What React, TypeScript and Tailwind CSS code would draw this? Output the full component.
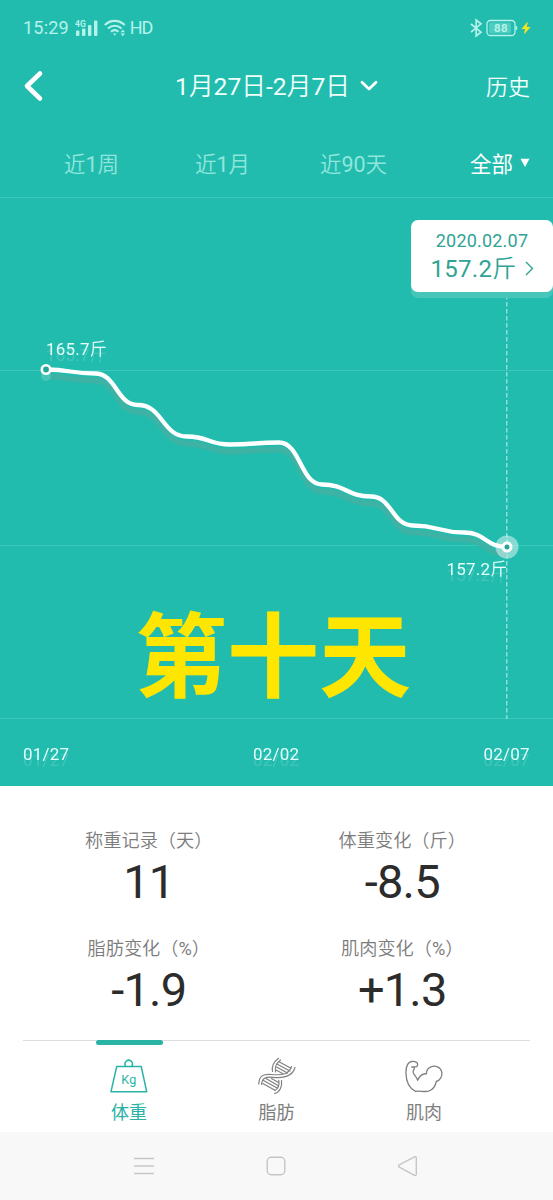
import type { ReactNode } from "react";

const ranges = ["近1周", "近1月", "近90天"];

const stats = [
  { label: "称重记录（天）", value: "11" },
  { label: "体重变化（斤）", value: "-8.5" },
  { label: "脂肪变化（%）", value: "-1.9" },
  { label: "肌肉变化（%）", value: "+1.3" }
];

// chart points in svg units, one per weigh-in
const points: [number, number][] = [
  [46, 171.5],
  [95, 175.5],
  [138, 207],
  [187, 238.5],
  [230, 246.5],
  [279, 244.5],
  [322, 286.5],
  [371, 298.5],
  [413, 327.5],
  [464, 334.5],
  [507, 349]
];

function smoothPath(list: [number, number][]) {
  return list.reduce((d, [x, y], i) => {
    if (i === 0) return `M${x} ${y}`;
    const [px, py] = list[i - 1];
    const mid = (px + x) / 2;
    return `${d} C${mid} ${py} ${mid} ${y} ${x} ${y}`;
  }, "");
}

// Chinese text is demi-light, digits keep the normal weight
function Mixed({ text }: { text: string }) {
  return (
    <span className="font-[350]">
      {text.split(/([\d%-]+)/).map((part, i) =>
        i % 2 ? (
          <span key={i} className="font-normal">
            {part}
          </span>
        ) : (
          part
        )
      )}
    </span>
  );
}

function StatusBar() {
  return (
    <div className="flex h-14 items-center justify-between pr-[22px] pl-[23px] text-[#b5f3ea]">
      <div className="flex items-center">
        <span className="text-[18px] leading-none tracking-[0.2px]">15:29</span>
        <svg className="ml-[6px]" width="24" height="18" viewBox="0 0 24 18" fill="currentColor">
          <text x="0" y="7.500" fontSize="8.500" fontWeight="700">4G</text>
          <rect x="1" y="11.500" width="3.400" height="5.500" rx="1" />
          <rect x="7" y="9.500" width="3.400" height="7.500" rx="1" />
          <rect x="13" y="6" width="3.400" height="11" rx="1" />
          <rect x="19" y="1.500" width="3.400" height="15.500" rx="1" />
        </svg>
        <svg className="ml-[5px]" width="23" height="18" viewBox="0 0 23 18" fill="none" stroke="currentColor" strokeWidth="2.100">
          <path d="M.8 6C6.500 .5 15 .5 20.700 6" />
          <path d="M4 9.500C8 5.800 13.500 5.800 17.500 9.500" />
          <path d="M7 12.800C9.300 10.800 12.200 10.800 14.500 12.800" />
          <path d="M9 14.500h3.400L10.700 16.800z" fill="currentColor" stroke="none" />
          <path d="M16.600 13.200L18.800 10.600L21 13.200zM16.600 14.600L18.800 17.200L21 14.600z" fill="currentColor" stroke="none" />
        </svg>
        <span className="ml-[3px] text-[18px] leading-none tracking-[-1.200px]">HD</span>
      </div>
      <div className="flex items-center">
        <svg width="14" height="20" viewBox="0 0 14 20" fill="none" stroke="currentColor" strokeWidth="1.700">
          <path d="M2 6L12 14.200L7.200 18V2L12 5.800L2 14.200" />
        </svg>
        <svg className="ml-[3px]" width="32" height="18" viewBox="0 0 32 18">
          <rect x="1" y="1.500" width="28" height="15" rx="3.500" fill="none" stroke="currentColor" strokeWidth="1.300" />
          <rect x="3" y="3.500" width="22" height="11" rx="1.500" fill="currentColor" opacity=".3" />
          <rect x="29.600" y="7" width="1.600" height="4" rx=".8" fill="currentColor" />
          <text x="15" y="13.200" textAnchor="middle" fontSize="11.500" fontWeight="700" fill="currentColor" letterSpacing=".5">88</text>
        </svg>
        <svg className="ml-[3px]" width="10" height="14" viewBox="0 0 10 14" fill="#f3e420">
          <path d="M6.800 .6L.5 8H4L3 13.400L9.600 6H5.800z" />
        </svg>
      </div>
    </div>
  );
}

function TitleBar() {
  return (
    <div className="relative flex h-[60px] items-center justify-between pr-[23px] pl-[22px] text-[#f0fffc]">
      <svg width="22" height="34" viewBox="0 0 22 34" fill="none" stroke="#fff" strokeWidth="4.600" strokeLinecap="round" strokeLinejoin="round">
        <path d="M18 4.500L5 17L18 29.500" />
      </svg>
      <div className="absolute left-[175px] flex items-center pt-[3px]">
        <span className="text-[24.700px] leading-none">
          <Mixed text="1月27日-2月7日" />
        </span>
        <svg className="mt-[-3px] ml-[10px]" width="18" height="12" viewBox="0 0 18 12" fill="none" stroke="#fff" strokeWidth="2.800" strokeLinecap="round" strokeLinejoin="round">
          <path d="M2 2.200L9 9L16 2.200" />
        </svg>
      </div>
      <span className="pt-[3px] text-[22px] leading-none font-[350]">历史</span>
    </div>
  );
}

function RangeTabs() {
  return (
    <div className="flex h-[82px] items-center border-b border-[#3ac7ba] pt-[16px] pl-[26px] text-[21.500px] leading-none text-[#90e6db]">
      {ranges.map((range) => (
        <button key={range} type="button" className="w-[131px] text-center">
          <Mixed text={range} />
        </button>
      ))}
      <button type="button" className="ml-[51px] flex items-center text-white">
        全部
        <svg className="mt-[-3px] ml-[7px]" width="10" height="10" viewBox="0 0 10 10" fill="#fff">
          <path d="M.5 .8H9.500L5 9z" />
        </svg>
      </button>
    </div>
  );
}

function WeightChart() {
  const line = smoothPath(points);
  return (
    <div className="relative">
      <svg className="block" width="553" height="588" viewBox="0 0 553 588" fill="none">
        <path d="M0 172.500H553M0 347.500H553M0 520.500H553" stroke="#3ac7ba" />
        <path d="M506.800 90V521" stroke="#a3e8df" strokeWidth="1.200" strokeDasharray="4.500 2.500" />
        <path d={line} transform="translate(0 7)" stroke="#3db3a5" strokeWidth="6" />
        <circle cx="46" cy="178" r="5" fill="#45c6ba" />
        <circle cx="507" cy="349" r="11.500" fill="#fff" opacity=".45" />
        <path d={line} stroke="#fff" strokeWidth="4.300" strokeLinejoin="round" />
        <circle cx="46" cy="171.500" r="4.200" fill="#25a698" stroke="#fff" strokeWidth="2.600" />
        <circle cx="507" cy="349" r="4" fill="#25a698" stroke="#fff" strokeWidth="3" />
        <g className="[filter:drop-shadow(0_6px_0_rgba(255,255,255,0.14))]" fill="#e4fffb" fontSize="17" letterSpacing=".2">
          <text x="46" y="156.500">165.7<tspan fontWeight="350">斤</tspan></text>
          <text x="446.500" y="377">157.2<tspan fontWeight="350">斤</tspan></text>
          <text x="23" y="562">01/27</text>
          <text x="253" y="562">02/02</text>
          <text x="483.500" y="562">02/07</text>
        </g>
      </svg>

      <div className="absolute top-[22px] right-0 flex h-[72px] w-[142px] flex-col items-center rounded-[7px] bg-white pt-[11px] text-[#2fa394] shadow-[0_6px_0_#45c6b8]">
        <span className="text-[18px] leading-[20px] tracking-[0.2px]">2020.02.07</span>
        <div className="mt-[4px] flex items-center">
          <span className="text-[24px] leading-[28px] tracking-[0.3px]">
            157.2<span className="font-[350]">斤</span>
          </span>
          <svg className="ml-[8px]" width="9" height="16" viewBox="0 0 9 16" fill="none" stroke="currentColor" strokeWidth="1.400">
            <path d="M1 1L7.500 7.500L1 14" />
          </svg>
        </div>
      </div>

      <div className="absolute top-[406px] left-[135px] text-[92px] leading-[110px] font-bold whitespace-nowrap text-[#ffe600]">第十天</div>
    </div>
  );
}

function NavItem({ label, active, children }: { label: string; active?: boolean; children: ReactNode }) {
  return (
    <button
      type="button"
      className={
        active
          ? "relative flex w-[147.500px] flex-col items-center pt-[16px] text-[#28b3a5]"
          : "relative flex w-[147.500px] flex-col items-center pt-[16px] text-[#808080]"
      }
    >
      {active && <span className="absolute top-[-1px] h-[5px] w-[67px] rounded-full bg-[#28b3a5]" />}
      {children}
      <span className="mt-[6px] text-[18px] leading-[24px]">{label}</span>
    </button>
  );
}

export default function App() {
  return (
    <div className="flex h-[1200px] w-[553px] flex-col overflow-hidden bg-white font-['Roboto','Noto_Sans_CJK_SC',sans-serif]">
      <header className="bg-[#22bcae]">
        <StatusBar />
        <TitleBar />
        <RangeTabs />
        <WeightChart />
      </header>

      <section className="grid h-[254px] grid-cols-2 content-start pt-[41px] pr-[24px] pl-[22px]">
        {stats.map((stat) => (
          <div key={stat.label} className="flex h-[108px] flex-col items-center">
            <span className="text-[18.200px] leading-[28px] text-[#7c7c7c]">
              <Mixed text={stat.label} />
            </span>
            <span className="text-[47px] leading-[54px] tracking-[-0.8px] text-[#2c2c2c]">{stat.value}</span>
          </div>
        ))}
      </section>

      <nav className="mx-[23px] flex h-[92px] justify-center border-t border-[#dedede]">
        <NavItem label="体重" active>
          <svg width="38" height="38" viewBox="0 0 38 38" fill="none" stroke="currentColor" strokeWidth="1.500" strokeLinejoin="round">
            <path d="M6.700 9.500H31.200L36.700 34.700H1z" />
            <path d="M15.800 9.300A3.700 3.700 0 1 1 21.600 9.300" />
            <text x="19" y="26.500" textAnchor="middle" fontSize="12.500" fill="currentColor" stroke="none" letterSpacing=".4">Kg</text>
          </svg>
        </NavItem>
        <NavItem label="脂肪">
          <svg width="38" height="38" viewBox="0 0 38 38" fill="none" stroke="currentColor" strokeWidth="1.200" strokeLinecap="round">
            <path d="M.8 27C1 19 5 16.500 14 17.500C25 18.500 31 17 33.500 9.500" />
            <path d="M3.600 27.500C4 21 7.500 19.500 15 20.300C27 21.500 34.500 19 37 10.500" />
            <path d="M20.500 1.300C15 5.500 13.500 9.500 14.500 14.500M22.500 3C17.500 7 16.500 10 17.500 14.800" />
            <path d="M16.500 36.500C21.500 35.500 24.500 30 23.500 23.500M16.800 33.500C20.500 31.500 21.500 28 20.800 23.300" />
            <path d="M21 4.800L33 11.200M18.800 7L32 14M18 9.800L29.500 16M18 13L25 16.700" />
            <path d="M8 21.500L20 28.500M5.500 23.500L19.500 31.200M4.800 26.500L17 33.300M13.500 21.500L20.500 25.500" />
          </svg>
        </NavItem>
        <NavItem label="肌肉">
          <svg width="38" height="38" viewBox="0 0 38 38" fill="none" stroke="currentColor" strokeWidth="1.300" strokeLinecap="round" strokeLinejoin="round">
            <path d="M6.800 10C9 9.500 11.800 10.700 12.500 8.500C13.300 5.500 10 3.800 6.500 4.500C2 5.500 .8 11 1 16.500C1.200 24.500 3.500 31 10.500 34.300C14 33.300 20 35.500 24 34C28 32.500 30.500 28.500 31.300 24.500C35 23.500 37.300 19.500 36.800 15.500C36 10 30 8 26 9.800C22.500 11.300 21.300 14 21.500 16.800C17.500 16.300 14.500 19 12.700 23.300C11.500 19.500 9 18 8.200 15.500C7.500 13 10.500 11.800 9 10.300" />
          </svg>
        </NavItem>
      </nav>

      <footer className="flex h-[68px] items-center bg-[#f8f8f8] pl-[134px] text-[#c6c6c6]">
        <svg width="20" height="18" viewBox="0 0 20 18" stroke="currentColor" strokeWidth="1.400">
          <path d="M0 1.500H20M0 9H20M0 16.500H20" />
        </svg>
        <svg className="ml-[112px]" width="20" height="20" viewBox="0 0 20 20" fill="none" stroke="currentColor" strokeWidth="1.400">
          <rect x="1.200" y="1.200" width="17.600" height="17.600" rx="4" />
        </svg>
        <svg className="ml-[112px]" width="20" height="22" viewBox="0 0 20 22" fill="none" stroke="currentColor" strokeWidth="1.400" strokeLinejoin="round">
          <path d="M.8 10.200Q-.2 11 .8 11.900L16.500 20.300Q18.300 20.800 18.300 19V3Q18.300 1.300 16.500 1.800z" />
        </svg>
      </footer>
    </div>
  );
}
